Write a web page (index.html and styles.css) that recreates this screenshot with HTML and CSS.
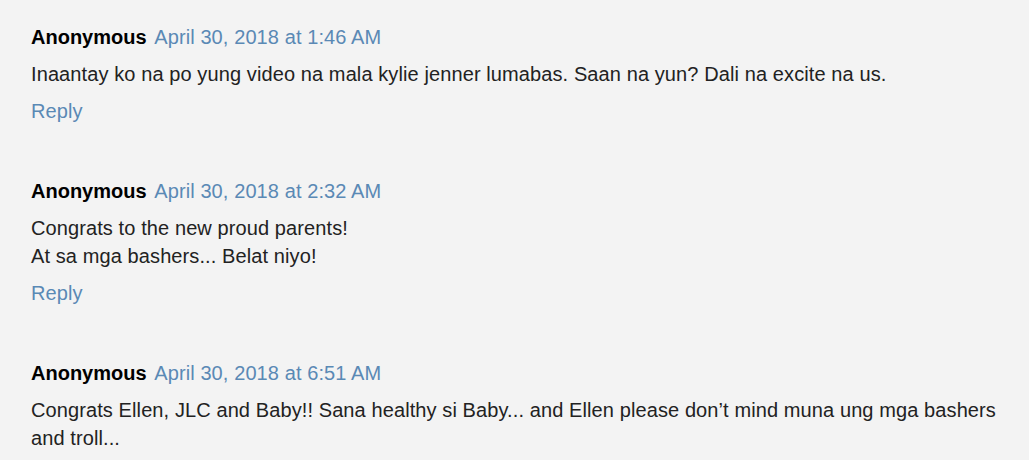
FILE: index.html
```html
<!DOCTYPE html>
<html>
<head>
<meta charset="utf-8">
<link rel="stylesheet" href="styles.css">
</head>
<body>
<div class="comments">
  <div class="comment">
    <div class="header"><span class="author">Anonymous</span> <a class="date" href="#">April 30, 2018 at 1:46 AM</a></div>
    <p class="body">Inaantay ko na po yung video na mala kylie jenner lumabas. Saan na yun? Dali na excite na us.</p>
    <a class="reply" href="#">Reply</a>
  </div>
  <div class="comment">
    <div class="header"><span class="author">Anonymous</span> <a class="date" href="#">April 30, 2018 at 2:32 AM</a></div>
    <p class="body">Congrats to the new proud parents!<br>At sa mga bashers... Belat niyo!</p>
    <a class="reply" href="#">Reply</a>
  </div>
  <div class="comment">
    <div class="header"><span class="author">Anonymous</span> <a class="date" href="#">April 30, 2018 at 6:51 AM</a></div>
    <p class="body">Congrats Ellen, JLC and Baby!! Sana healthy si Baby... and Ellen please don’t mind muna ung mga bashers and troll...</p>
  </div>
</div>
</body>
</html>
```
FILE: styles.css
```css
html, body {
  margin: 0;
  background: #f3f3f3;
}
body {
  font-family: "Liberation Sans", Arial, sans-serif;
  font-size: 20px;
  line-height: 28px;
  color: #222;
  letter-spacing: 0.1px;
}
.comments {
  padding: 23px 4px 0 31px;
}
.comment {
  display: flex;
  flex-direction: column;
  align-items: flex-start;
  gap: 9px;
  margin-bottom: 52px;
}
.header {
  white-space: nowrap;
}
.author {
  font-weight: bold;
  color: #000;
  letter-spacing: 0;
}
.date {
  margin-left: 2px;
}
.date, .reply {
  color: #5a89b5;
  text-decoration: none;
}
.body {
  margin: 0;
}
```
